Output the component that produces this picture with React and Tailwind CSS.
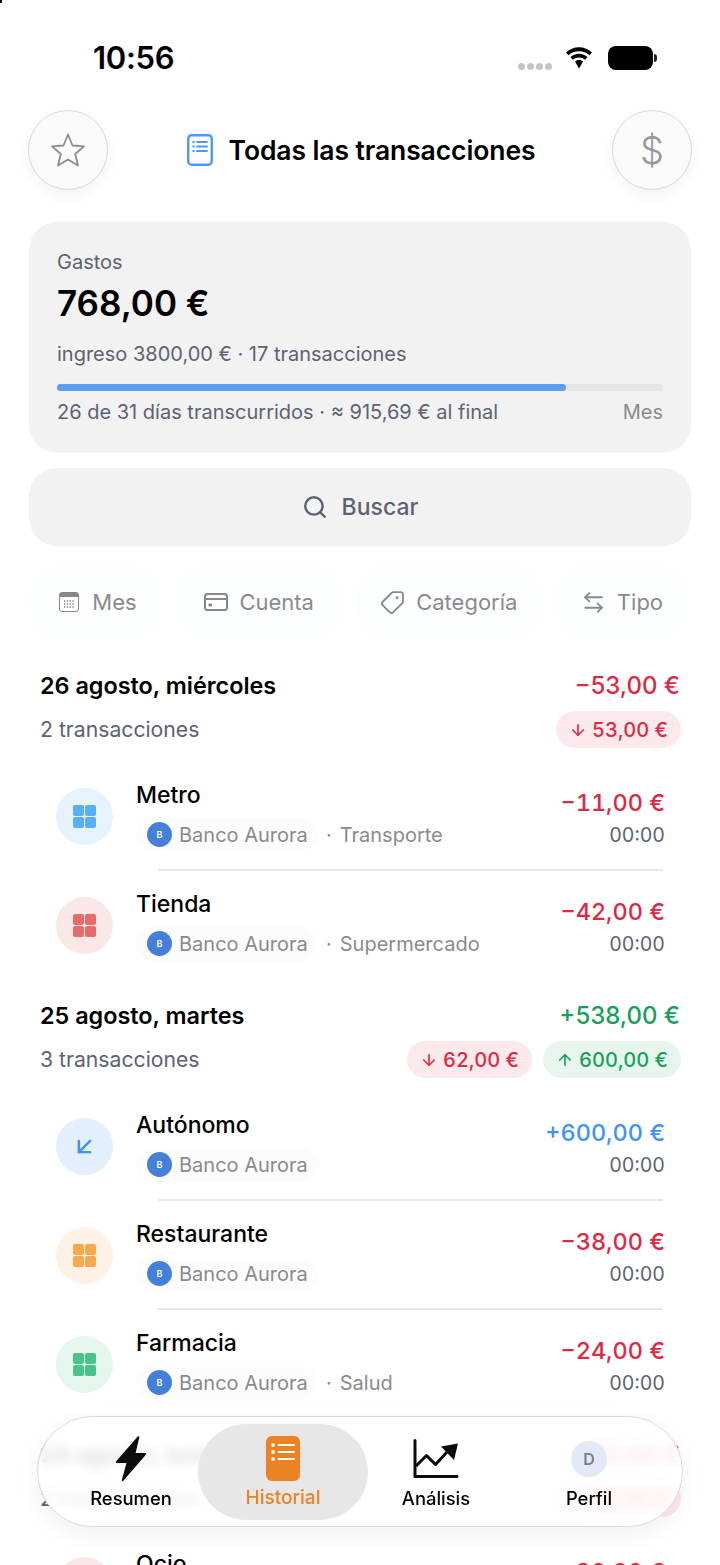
import React from 'react';
import { Search, Tag, ArrowLeftRight, ArrowDownLeft, ArrowDown, ArrowUp } from 'lucide-react';

const groups = [
  {
    date: '26 agosto, miércoles',
    total: '−53,00 €',
    totalColor: 'text-[#dc2a45]',
    count: '2 transacciones',
    pills: [{ dir: 'down', value: '53,00 €' }],
    rows: [
      { name: 'Metro', color: 'blue', note: 'Transporte', amount: '−11,00 €' },
      { name: 'Tienda', color: 'red', note: 'Supermercado', amount: '−42,00 €' },
    ],
  },
  {
    date: '25 agosto, martes',
    total: '+538,00 €',
    totalColor: 'text-[#16a05a]',
    count: '3 transacciones',
    pills: [
      { dir: 'down', value: '62,00 €' },
      { dir: 'up', value: '600,00 €' },
    ],
    rows: [
      { name: 'Autónomo', color: 'income', amount: '+600,00 €' },
      { name: 'Restaurante', color: 'orange', amount: '−38,00 €' },
      { name: 'Farmacia', color: 'green', note: 'Salud', amount: '−24,00 €' },
    ],
  },
  {
    date: '24 agosto, lunes',
    total: '−83,00 €',
    totalColor: 'text-[#dc2a45]',
    count: '2 transacciones',
    pills: [{ dir: 'down', value: '83,00 €' }],
    rows: [{ name: 'Ocio', color: 'red', amount: '−30,00 €' }],
  },
];

const circleColors = {
  blue: 'bg-[#e6f3fe]',
  red: 'bg-[#fae8e9]',
  income: 'bg-[#e3effd]',
  orange: 'bg-[#fef2e6]',
  green: 'bg-[#e5f6ee]',
};

const tileColors = {
  blue: 'bg-[#59aef8]',
  red: 'bg-[#e76b6d]',
  orange: 'bg-[#f9a84b]',
  green: 'bg-[#47c38c]',
};

const CategoryIcon = ({ color }) => (
  <div className={`w-[57px] h-[57px] shrink-0 rounded-full flex items-center justify-center ${circleColors[color]}`}>
    {color === 'income' ? (
      <ArrowDownLeft size={27} strokeWidth={2.2} className="text-[#3f93f7]" />
    ) : (
      <div className="grid grid-cols-2 gap-[1.5px]">
        <div className={`w-[10.5px] h-[10.5px] rounded-[2px] ${tileColors[color]}`} />
        <div className={`w-[10.5px] h-[10.5px] rounded-[2px] ${tileColors[color]}`} />
        <div className={`w-[10.5px] h-[10.5px] rounded-[2px] ${tileColors[color]}`} />
        <div className={`w-[10.5px] h-[10.5px] rounded-[2px] ${tileColors[color]}`} />
      </div>
    )}
  </div>
);

const Row = ({ row, last }) => (
  <div className="relative h-[109px] flex items-center pl-[16px] pr-[15px]">
    <CategoryIcon color={row.color} />
    <div className="ml-[24px] flex-1 min-w-0 mt-[-1px]">
      <div className="text-[23px] leading-[28px] font-medium text-black -ml-[1px]">{row.name}</div>
      <div className="flex items-center mt-[9px] h-[34px] -ml-[1px]">
        <div className="flex items-center h-[34px] w-[181px] pl-[11px] rounded-full bg-[#fcfcfc]">
          <div className="w-[25px] h-[25px] rounded-full bg-[#4580d8] text-white text-[9px] font-semibold flex items-center justify-center">B</div>
          <span className="ml-[7px] text-[20px] text-[#8a8a8e] whitespace-nowrap">Banco Aurora</span>
        </div>
        {row.note && (
          <>
            <span className="ml-[9px] text-[20px] text-[#8a8a8e]">·</span>
            <span className="ml-[8px] text-[20px] text-[#8a8a8e] whitespace-nowrap">{row.note}</span>
          </>
        )}
      </div>
    </div>
    <div className="text-right mt-[3px]">
      <div className={`text-[23.5px] leading-[30px] font-medium tabular-nums ${row.color === 'income' ? 'text-[#3f93f7]' : 'text-[#dc2a45]'}`}>{row.amount}</div>
      <div className="text-[19.5px] leading-[26px] mt-[4px] text-[#5d6272] tabular-nums">00:00</div>
    </div>
    {!last && <div className="absolute left-[118px] right-[17px] bottom-0 h-[2px] bg-[#e6e6e8]" />}
  </div>
);

const Pill = ({ dir, value }) => (
  <div className={`h-[37px] px-[13px] rounded-full flex items-center gap-[5px] text-[20px] font-medium tabular-nums ${dir === 'down' ? 'bg-[#fbe9eb] text-[#dc2a45]' : 'bg-[#e8f5ee] text-[#16a05a]'}`}>
    {dir === 'down' ? <ArrowDown size={18} strokeWidth={2.2} /> : <ArrowUp size={18} strokeWidth={2.2} />}
    {value}
  </div>
);

const Group = ({ group }) => (
  <section className="mb-[21px]">
    <div className="flex justify-between items-center h-[30px]">
      <div className="text-[23.4px] font-semibold text-black">{group.date}</div>
      <div className={`text-[24px] font-medium ${group.totalColor}`}>{group.total}</div>
    </div>
    <div className="flex justify-between items-center mt-[10px] h-[37px]">
      <div className="text-[21.2px] text-[#5d6272]">{group.count}</div>
      <div className="flex gap-[11px] -mr-[1px]">
        {group.pills.map((p) => (
          <Pill key={p.dir} dir={p.dir} value={p.value} />
        ))}
      </div>
    </div>
    <div className="mt-[14px]">
      {group.rows.map((row, i) => (
        <Row key={row.name} row={row} last={i === group.rows.length - 1} />
      ))}
    </div>
  </section>
);

const Filter = ({ icon, label, className }) => (
  <div className={`h-[74px] rounded-[30px] bg-[#fdfefe] flex items-center justify-center gap-[11px] text-[22px] text-[#8a8a8e] ${className}`}>
    {icon}
    <span>{label}</span>
  </div>
);

const DocIcon = () => (
  <svg width="26" height="32" viewBox="0 0 26 32" fill="none">
    <rect x="1.2" y="1.2" width="23.6" height="29.6" rx="3.5" stroke="#4a98f8" strokeWidth="2.4" />
    <path d="M10 8h10M10 12.5h10M10 17h10" stroke="#4a98f8" strokeWidth="1.8" strokeLinecap="round" />
    <circle cx="6.5" cy="8" r="1.2" fill="#4a98f8" />
    <circle cx="6.5" cy="12.5" r="1.2" fill="#4a98f8" />
    <circle cx="6.5" cy="17" r="1.2" fill="#4a98f8" />
  </svg>
);

const tabs = [
  {
    label: 'Resumen',
    width: 'w-[148px] pl-[14px]',
    icon: (
      <svg width="32" height="46" viewBox="0 0 32 46">
        <path d="M22.5 0.8 1 25.5c-.6.8-.2 1.6.7 1.6h9.8L6.8 44c-.3 1.2.9 1.7 1.6.8L31 18.6c.6-.8.2-1.6-.7-1.6h-9.7l3.7-15.6c.3-1.1-1-1.5-1.8-.6z" fill="#0c0c0e" />
      </svg>
    ),
  },
  {
    label: 'Historial',
    width: 'w-[170px]',
    active: true,
    icon: (
      <div className="w-[34px] h-[45px] rounded-[6px] bg-[#ec8223] flex items-center justify-center pb-[14px]">
        <svg width="24" height="18" viewBox="0 0 24 18" fill="none">
          <path d="M7.5 2h15.500M7.5 9h15.500M7.5 16h15.500" stroke="#fff" strokeWidth="2" strokeLinecap="round" />
          <circle cx="2" cy="2" r="1.900" fill="#fff" />
          <circle cx="2" cy="9" r="1.900" fill="#fff" />
          <circle cx="2" cy="16" r="1.900" fill="#fff" />
        </svg>
      </div>
    ),
  },
  {
    label: 'Análisis',
    width: 'w-[136px]',
    icon: (
      <svg width="46" height="40" viewBox="0 0 46 40" fill="none">
        <path d="M2 1.500V37.500H44" stroke="#0c0c0e" strokeWidth="3" strokeLinecap="round" strokeLinejoin="round" />
        <path d="M3 27 13.500 16.500 22.500 25.500 35 12" stroke="#0c0c0e" strokeWidth="3" strokeLinejoin="round" />
        <path d="M28 7.500 45 4.500 41 21z" fill="#0c0c0e" />
      </svg>
    ),
  },
  {
    label: 'Perfil',
    width: 'flex-1',
    icon: (
      <div className="w-[36px] h-[36px] rounded-full bg-[#e3e8f6] flex items-center justify-center text-[16px] font-semibold text-[#7b7d86]">D</div>
    ),
  },
];

const TabBar = () => (
  <nav className="absolute left-[37px] top-[1416px] w-[646px] h-[111px] rounded-[56px] border border-[#d8d8da] bg-white/85 backdrop-blur-[6px] shadow-[0_8px_24px_rgba(0,0,0,0.06)] flex items-center pl-[12px] pr-[8px]">
    {tabs.map((tab) => (
      <div
        key={tab.label}
        className={`h-[96px] rounded-[48px] flex flex-col items-center ${tab.width} ${tab.active ? 'bg-[#e7e7e8] text-[#ec8223]' : 'text-black'}`}
      >
        <div className="h-[50px] mt-[10px] flex items-center justify-center">{tab.icon}</div>
        <div className={`leading-[22px] font-medium mt-[3px] ${tab.active ? 'text-[19px]' : 'text-[18.4px]'}`}>{tab.label}</div>
      </div>
    ))}
  </nav>
);

export default function App() {
  return (
    <div className="relative w-[720px] h-[1565px] overflow-hidden bg-white font-['Inter',sans-serif]">
      <div className="absolute left-0 top-0 w-[2px] h-[3px] bg-black" />

      {/* status bar */}
      <div className="h-[110px] pl-[93px] pr-[63px] pt-[6px] flex items-center justify-between">
        <div className="text-[31px] font-semibold text-black tracking-[-0.3px]">10:56</div>
        <div className="flex items-center">
          <div className="flex gap-[2px] mt-[16px]">
            <div className="w-[7px] h-[7px] rounded-full bg-[#c4c4c6]" />
            <div className="w-[7px] h-[7px] rounded-full bg-[#c4c4c6]" />
            <div className="w-[7px] h-[7px] rounded-full bg-[#c4c4c6]" />
            <div className="w-[7px] h-[7px] rounded-full bg-[#c4c4c6]" />
          </div>
          <svg className="ml-[12px]" width="30" height="22" viewBox="0 0 30 22">
            <path d="M15 4.200c4 0 7.700 1.500 10.500 4.100l2.500-2.700C24.500 2.200 20 .3 15 .3S5.500 2.200 2 5.600l2.500 2.700C7.300 5.700 11 4.200 15 4.200z" fill="#000" />
            <path d="M15 10.500c2.300 0 4.400.9 6 2.300l2.500-2.700C21.300 8 18.300 6.700 15 6.700s-6.300 1.300-8.500 3.400L9 12.800c1.600-1.400 3.700-2.300 6-2.300z" fill="#000" />
            <path d="M15 13c-1.600 0-3 .6-4 1.600l4 6.900 4-6.900c-1-1-2.400-1.600-4-1.600z" fill="#000" />
          </svg>
          <div className="ml-[14px] w-[45px] h-[24px] rounded-[8px] bg-black" />
          <div className="ml-[1px] w-[3px] h-[8px] rounded-r-full bg-[#222]" />
        </div>
      </div>

      {/* header */}
      <header className="h-[80px] px-[28px] flex items-center justify-between">
        <div className="w-[80px] h-[80px] rounded-full border border-[#d8d8d8] bg-[#fafafa] shadow-[0_6px_14px_rgba(0,0,0,0.05)] flex items-center justify-center">
          <svg width="36" height="36" viewBox="0 0 36 36" fill="none">
            <path d="M18 2.500 22.500 13.500 34 14.400 25.200 22 28 33.500 18 27.400 8 33.500 10.800 22 2 14.400 13.500 13.500z" stroke="#8e8e92" strokeWidth="1.800" strokeLinejoin="round" />
          </svg>
        </div>
        <div className="flex items-center gap-[16px] pl-[2px]">
          <DocIcon />
          <h1 className="text-[26.5px] pt-[1px] font-semibold text-black tracking-[-0.1px]">Todas las transacciones</h1>
        </div>
        <div className="w-[80px] h-[80px] rounded-full border border-[#d8d8d8] bg-[#fafafa] shadow-[0_6px_14px_rgba(0,0,0,0.05)] flex items-center justify-center text-[38px] font-light text-[#98989c]">
          $
        </div>
      </header>

      {/* summary */}
      <div className="mx-[29px] mt-[32px] h-[231px] rounded-[28px] bg-[#f2f2f3] px-[28px] pt-[27px]">
        <div className="text-[20px] leading-[26px] text-[#5d6272]">Gastos</div>
        <div className="text-[35px] leading-[44px] mt-[6px] font-semibold text-black">768,00 €</div>
        <div className="text-[20px] leading-[26px] mt-[16px] text-[#5d6272]">ingreso 3800,00 € · 17 transacciones</div>
        <div className="h-[7px] mt-[17px] rounded-full bg-[#e5e5e6]">
          <div className="h-full w-[84%] rounded-full bg-[#5a9df2]" />
        </div>
        <div className="flex justify-between mt-[8px] text-[20px] leading-[26px] text-[#5d6272]">
          <span>26 de 31 días transcurridos · ≈ 915,69 € al final</span>
          <span className="text-[#8a8a8e]">Mes</span>
        </div>
      </div>

      {/* search */}
      <div className="mx-[29px] mt-[15px] h-[78px] rounded-[28px] bg-[#f2f2f3] flex items-center justify-center gap-[14px] text-[23px] font-medium text-[#5d6272]">
        <Search size={26} strokeWidth={2.2} />
        <span>Buscar</span>
      </div>

      {/* filters */}
      <div className="flex mt-[19px] pl-[30px] pr-[33px] justify-between">
        <Filter
          className="w-[130px] !gap-[13px] pl-[6px]"
          label="Mes"
          icon={
            <svg width="20" height="20" viewBox="0 0 20 20">
              <rect x="0.500" y="0.500" width="19" height="19" rx="2.500" fill="#fff" stroke="#88888c" />
              <path d="M3 0.500h14a2.500 2.500 0 0 1 2.500 2.500v2H.5V3A2.500 2.500 0 0 1 3 .5z" fill="#88888c" />
              <path d="M5 9h10M5 12h10M5 15h10" stroke="#88888c" strokeWidth="1.400" strokeDasharray="1.400 1.400" />
            </svg>
          }
        />
        <Filter
          className="w-[165px] pl-[2px]"
          label="Cuenta"
          icon={
            <svg width="24" height="18" viewBox="0 0 24 18" fill="none">
              <rect x="1" y="1" width="22" height="16" rx="2.500" stroke="#88888c" strokeWidth="2" />
              <path d="M1 6h22" stroke="#88888c" strokeWidth="2" />
              <rect x="4.500" y="10.500" width="3.500" height="3" rx="0.800" fill="#88888c" />
            </svg>
          }
        />
        <Filter
          className="w-[185px]"
          label="Categoría"
          icon={<Tag size={25} strokeWidth={1.8} className="rotate-[90deg] text-[#88888c]" />}
        />
        <Filter
          className="w-[130px]"
          label="Tipo"
          icon={<ArrowLeftRight size={25} strokeWidth={1.8} className="text-[#88888c]" />}
        />
      </div>

      {/* transactions */}
      <div className="px-[40px] mt-[32px]">
        {groups.map((g) => (
          <Group key={g.date} group={g} />
        ))}
      </div>

      <TabBar />
    </div>
  );
}
